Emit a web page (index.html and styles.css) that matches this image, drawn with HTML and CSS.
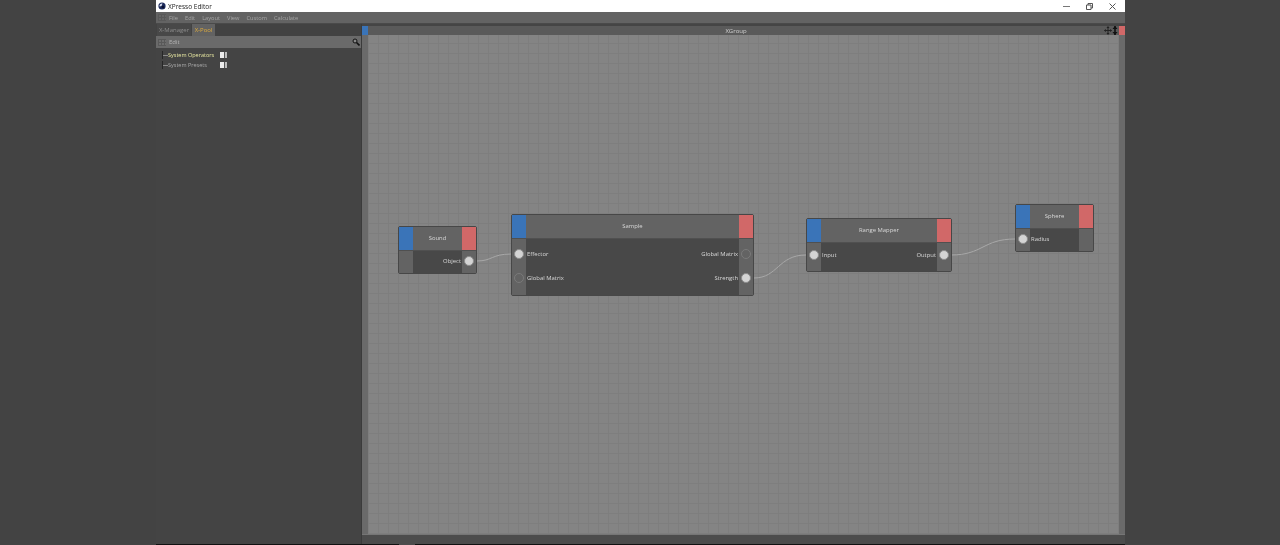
FILE: index.html
```html
<!DOCTYPE html>
<html lang="en">
<head>
    <meta charset="UTF-8">
    <meta name="viewport" content="width=device-width, initial-scale=1.0">
    <title>XPresso Editor</title>
    <link rel="stylesheet" href="styles.css">
</head>
<body>
    <div class="window">
        <div class="titlebar">
            <svg class="app-icon" width="8" height="8" viewBox="0 0 8 8">
                <circle cx="4" cy="4" r="3.6" fill="#1c2a5c"/>
                <path d="M1.5 4.5a2.6 2.6 0 0 1 3-3l-1 2.4z" fill="#dfe4f2"/>
                <circle cx="5" cy="5" r="1.3" fill="#0b1130"/>
            </svg>
            <span class="title-text">XPresso Editor</span>
            <div class="win-controls">
                <svg width="7" height="7" viewBox="0 0 7 7"><path d="M0 3.5h7" stroke="#777" fill="none"/></svg>
                <svg width="7" height="7" viewBox="0 0 7 7"><path d="M.5 2h4.5v4.5H.5zM2 2V.5h4.5V5H5" stroke="#555" fill="none"/></svg>
                <svg width="7" height="7" viewBox="0 0 7 7"><path d="M.5.5l6 6M6.5.5l-6 6" stroke="#555" fill="none"/></svg>
            </div>
        </div>

        <div class="menubar">
            <span class="grip"></span>
            <div class="menu-items">
                <span>File</span>
                <span>Edit</span>
                <span>Layout</span>
                <span>View</span>
                <span>Custom</span>
                <span>Calculate</span>
            </div>
        </div>

        <div class="main">
            <div class="side">
                <div class="tabs">
                    <span class="tab">X-Manager</span>
                    <span class="tab tab-active">X-Pool</span>
                </div>
                <div class="side-toolbar">
                    <span class="grip"></span>
                    <span class="side-edit">Edit</span>
                    <svg class="search" width="8" height="8" viewBox="0 0 8 8">
                        <circle cx="3" cy="3" r="2" fill="#888" stroke="#111"/>
                        <path d="M4.5 4.5L7.5 7.5" stroke="#111" stroke-width="1.6"/>
                    </svg>
                </div>
                <ul class="tree">
                    <li class="tree-row tree-selected">
                        <span class="tree-dash"></span>
                        <span class="tree-label">System Operators</span>
                        <span class="tree-icon"></span>
                    </li>
                    <li class="tree-row">
                        <span class="tree-dash"></span>
                        <span class="tree-label">System Presets</span>
                        <span class="tree-icon"></span>
                    </li>
                </ul>
            </div>

            <div class="editor">
                <div class="editor-head">
                    <span class="corner corner-blue"></span>
                    <span class="editor-title">XGroup</span>
                    <svg class="head-icons" width="14" height="9" viewBox="0 0 14 9">
                        <path d="M4 1v7M.5 4.5h7" stroke="#222" fill="none"/>
                        <path d="M4 0l1.5 2h-3zM4 9l1.5-2h-3zM0 4.5l2-1.5v3zM8 4.5l-2-1.5v3z" fill="#222"/>
                        <path d="M11 0v9" stroke="#111" stroke-width="1.6" fill="none"/>
                        <path d="M11 0l2.5 3h-5zM11 9l2.5-3h-5z" fill="#111"/>
                    </svg>
                    <span class="corner corner-red"></span>
                </div>
                <div class="editor-body">
                    <div class="canvas">
                        <!-- canvas coords: page x - 368, page y - 35 -->
                        <svg class="wires" width="751" height="499" viewBox="0 0 751 499">
                            <path d="M109 226C124 226 124 219 143 219"/>
                            <path d="M386 243C410 243 410 220 438 220"/>
                            <path d="M583 220C615 220 615 204 647 204"/>
                        </svg>

                        <div class="node node-sound">
                            <div class="node-head">
                                <span class="node-blue"></span>
                                <span class="node-name">Sound</span>
                                <span class="node-red"></span>
                            </div>
                            <div class="node-body">
                                <div class="port-col"></div>
                                <div class="label-col label-right"><span>Object</span></div>
                                <div class="port-col"><span class="port"></span></div>
                            </div>
                        </div>

                        <div class="node node-sample">
                            <div class="node-head">
                                <span class="node-blue"></span>
                                <span class="node-name">Sample</span>
                                <span class="node-red"></span>
                            </div>
                            <div class="node-body">
                                <div class="port-col">
                                    <span class="port"></span>
                                    <span class="port port-empty"></span>
                                </div>
                                <div class="label-col">
                                    <span>Effector</span>
                                    <span>Global Matrix</span>
                                </div>
                                <div class="label-col label-right">
                                    <span>Global Matrix</span>
                                    <span>Strength</span>
                                </div>
                                <div class="port-col">
                                    <span class="port port-empty"></span>
                                    <span class="port"></span>
                                </div>
                            </div>
                        </div>

                        <div class="node node-range">
                            <div class="node-head">
                                <span class="node-blue"></span>
                                <span class="node-name">Range Mapper</span>
                                <span class="node-red"></span>
                            </div>
                            <div class="node-body">
                                <div class="port-col"><span class="port"></span></div>
                                <div class="label-col"><span>Input</span></div>
                                <div class="label-col label-right"><span>Output</span></div>
                                <div class="port-col"><span class="port"></span></div>
                            </div>
                        </div>

                        <div class="node node-sphere">
                            <div class="node-head">
                                <span class="node-blue"></span>
                                <span class="node-name">Sphere</span>
                                <span class="node-red"></span>
                            </div>
                            <div class="node-body">
                                <div class="port-col"><span class="port"></span></div>
                                <div class="label-col"><span>Radius</span></div>
                                <div class="port-col"></div>
                            </div>
                        </div>
                    </div>
                </div>
                <div class="editor-foot"></div>
            </div>
        </div>
        <div class="window-edge"><span class="edge-tick"></span></div>
    </div>
</body>
</html>
```

FILE: styles.css
```css
html, body {
    margin: 0;
    height: 100%;
}
body {
    background-color: #434343;
    font-family: "Open Sans", "Noto Sans", sans-serif;
    overflow: hidden;
}
.window {
    margin-left: 156px;
    width: 969px;
    height: 545px;
    display: flex;
    flex-direction: column;
    background-color: #444;
    filter: blur(0.35px);
}

/* title bar */
.titlebar {
    height: 12px;
    flex: none;
    background-color: #fff;
    display: flex;
    align-items: center;
    padding-left: 2px;
    font-size: 6.5px;
    color: #222;
}
.app-icon {
    margin-right: 2px;
}
.win-controls {
    margin-left: auto;
    display: flex;
    gap: 16px;
    margin-right: 9px;
}

/* menu */
.menubar {
    height: 11px;
    flex: none;
    background-color: #636363;
    display: flex;
    align-items: center;
    padding-left: 2px;
    font-size: 5.7px;
    color: #a6a6a6;
    border-bottom: 1px solid #4a4a4a;
}
.menu-items {
    display: flex;
    gap: 7px;
}
.grip {
    width: 8px;
    height: 7px;
    margin-right: 3px;
    background-color: #666;
    background-image: repeating-linear-gradient(90deg, #595959 0, #595959 1px, transparent 1px, transparent 3px),
        repeating-linear-gradient(0deg, #595959 0, #595959 1px, transparent 1px, transparent 3px);
}

.main {
    flex: 1;
    display: flex;
    min-height: 0;
}

/* left panel */
.side {
    width: 205px;
    flex: none;
    display: flex;
    flex-direction: column;
    background-color: #444;
    border-right: 1px solid #3b3b3b;
}
.tabs {
    height: 12px;
    flex: none;
    display: flex;
    align-items: stretch;
    background-color: #424242;
    font-size: 6px;
    padding-left: 1px;
    gap: 1px;
}
.tab {
    width: 34px;
    display: flex;
    align-items: center;
    justify-content: center;
    color: #8c8c8c;
    background-color: #484848;
}
.tab-active {
    width: 23px;
    background-color: #626262;
    color: #dcaa3e;
}
.side-toolbar {
    height: 12px;
    flex: none;
    background-color: #6a6a6a;
    display: flex;
    align-items: center;
    padding-left: 2px;
    font-size: 6px;
    color: #b4b4b4;
}
.side-toolbar .grip {
    background-color: #6e6e6e;
}
.search {
    margin-left: auto;
    margin-right: 1px;
}
.tree {
    list-style: none;
    margin: 0;
    padding: 2px 0 0 6px;
    font-size: 5.5px;
    color: #a8a8a8;
}
.tree-row {
    height: 10px;
    display: flex;
    align-items: center;
}
.tree-dash {
    width: 6px;
    height: 8px;
    border-left: 1px solid #262626;
    box-sizing: border-box;
    flex: none;
    background-image: linear-gradient(#8a8a8a, #8a8a8a);
    background-size: 5px 1px;
    background-position: 0 4px;
    background-repeat: no-repeat;
}
.tree-label {
    width: 52px;
}
.tree-selected .tree-label {
    color: #e6e6a0;
}
.tree-icon {
    width: 7px;
    height: 6px;
    background-color: #ececec;
    background-image: linear-gradient(90deg, transparent 4px, #555 4px, #555 5px, #bdbdbd 5px);
}

/* editor */
.editor {
    flex: 1;
    display: flex;
    flex-direction: column;
    min-width: 0;
    background-color: #454545;
    padding-top: 2px;
}
.editor-head {
    height: 9px;
    flex: none;
    background-color: #5a5a5a;
    display: flex;
    align-items: center;
    font-size: 6px;
    color: #d0d0d0;
}
.corner {
    width: 6px;
    height: 9px;
    flex: none;
}
.corner-blue {
    background-color: #3a74b8;
}
.corner-red {
    background-color: #d16868;
}
.editor-title {
    flex: 1;
    text-align: center;
}
.head-icons {
    margin-right: 1px;
}
.editor-body {
    flex: 1;
    display: flex;
    min-height: 0;
    padding: 0 6px;
    background-color: #6a6a6a;
}
.canvas {
    flex: 1;
    position: relative;
    background-color: #848484;
    background-image: repeating-linear-gradient(90deg, #7e7e7e 0, #7e7e7e 1px, transparent 1px, transparent 10px),
        repeating-linear-gradient(0deg, #7e7e7e 0, #7e7e7e 1px, transparent 1px, transparent 10px);
}
.editor-foot {
    height: 9px;
    flex: none;
    background-color: #4c4c4c;
    border-top: 1px solid #767676;
}
.window-edge {
    height: 1px;
    flex: none;
    background-color: #111;
    display: flex;
    padding-left: 243px;
}
.edge-tick {
    width: 16px;
    background-color: #4c4c4c;
}

/* nodes */
.wires {
    position: absolute;
    left: 0;
    top: 0;
}
.wires path {
    fill: none;
    stroke: #a8a8a8;
    stroke-width: 1;
}
.node {
    --pad: 5px;
    position: absolute;
    display: flex;
    flex-direction: column;
    border: 1px solid #474747;
    border-radius: 2px;
    background-color: #636363;
    font-size: 5.9px;
    color: #d8d8d8;
    box-sizing: border-box;
}
.node-sound {
    left: 30px;
    top: 191px;
    width: 79px;
    height: 48px;
}
.node-sample {
    --pad: 10px;
    left: 143px;
    top: 179px;
    width: 243px;
    height: 82px;
}
.node-range {
    --pad: 7px;
    left: 438px;
    top: 183px;
    width: 146px;
    height: 54px;
}
.node-sphere {
    left: 647px;
    top: 169px;
    width: 79px;
    height: 48px;
}
.node-head {
    height: 23px;
    flex: none;
    display: flex;
    background-color: #636363;
}
.node-blue {
    width: 14px;
    background-color: #3a74b8;
}
.node-red {
    width: 14px;
    background-color: #d16868;
}
.node-name {
    flex: 1;
    display: flex;
    align-items: center;
    justify-content: center;
    padding-bottom: 2px;
    box-sizing: border-box;
}
.node-body {
    flex: 1;
    display: flex;
    background-color: #484848;
    border-top: 1px solid #505050;
}
.port-col {
    width: 14px;
    flex: none;
    background-color: #636363;
    display: flex;
    flex-direction: column;
    align-items: center;
    gap: 14px;
    padding-top: var(--pad);
    box-sizing: border-box;
}
.port {
    width: 10px;
    height: 10px;
    border-radius: 50%;
    background-color: #d4d4d4;
    box-sizing: border-box;
    border: 1px solid #8c8c8c;
}
.port-empty {
    background-color: transparent;
    border: 1px solid #7a7a7a;
}
.label-col {
    flex: 1;
    display: flex;
    flex-direction: column;
    gap: 14px;
    padding: var(--pad) 1px 0 1px;
    white-space: nowrap;
    line-height: 10px;
}
.label-right {
    text-align: right;
}
```
